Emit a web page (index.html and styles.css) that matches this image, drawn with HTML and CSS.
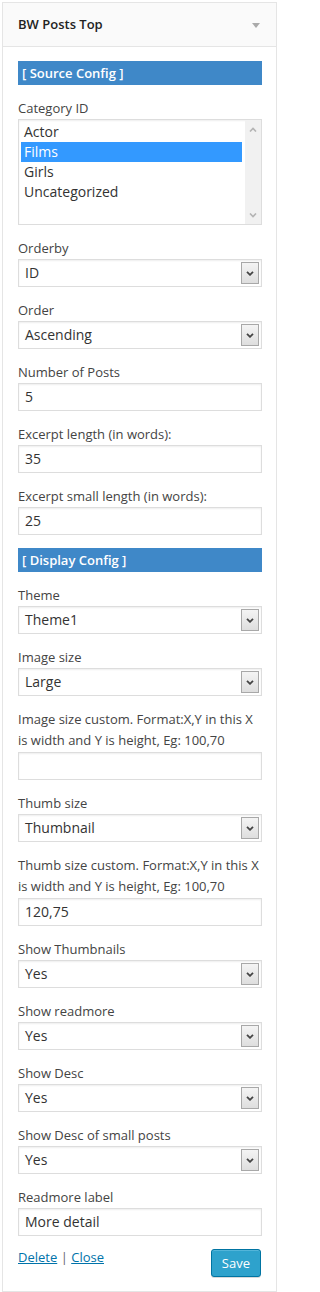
FILE: index.html
```html
<!DOCTYPE html>
<html>
<head>
<meta charset="utf-8">
<link rel="stylesheet" href="styles.css">
</head>
<body>
<div class="widget">
  <div class="widget-top">
    <h3 class="widget-title">BW Posts Top</h3>
    <span class="toggle"></span>
  </div>
  <div class="widget-inside">
    <div class="section">[ Source Config ]</div>

    <div class="field">
      <label class="lbl">Category ID</label>
      <div class="listbox">
        <div class="options">
          <div class="opt">Actor</div>
          <div class="opt selected">Films</div>
          <div class="opt">Girls</div>
          <div class="opt">Uncategorized</div>
        </div>
        <div class="scrollbar">
          <svg class="sb-arrow" width="8" height="5" viewBox="0 0 8 5"><polyline points="1,4.5 4,1.5 7,4.5" fill="none" stroke="#b4b4b4" stroke-width="1.6"/></svg>
          <svg class="sb-arrow" width="8" height="5" viewBox="0 0 8 5"><polyline points="1,0.5 4,3.5 7,0.5" fill="none" stroke="#b4b4b4" stroke-width="1.6"/></svg>
        </div>
      </div>
    </div>

    <div class="field">
      <label class="lbl">Orderby</label>
      <div class="select"><span>ID</span><span class="dd"><svg width="8" height="5" viewBox="0 0 8 5"><polyline points="1,0.8 4,3.8 7,0.8" fill="none" stroke="#444" stroke-width="1.8"/></svg></span></div>
    </div>

    <div class="field">
      <label class="lbl">Order</label>
      <div class="select"><span>Ascending</span><span class="dd"><svg width="8" height="5" viewBox="0 0 8 5"><polyline points="1,0.8 4,3.8 7,0.8" fill="none" stroke="#444" stroke-width="1.8"/></svg></span></div>
    </div>

    <div class="field">
      <label class="lbl">Number of Posts</label>
      <div class="input">5</div>
    </div>

    <div class="field">
      <label class="lbl">Excerpt length (in words):</label>
      <div class="input">35</div>
    </div>

    <div class="field">
      <label class="lbl">Excerpt small length (in words):</label>
      <div class="input">25</div>
    </div>

    <div class="section">[ Display Config ]</div>

    <div class="field">
      <label class="lbl">Theme</label>
      <div class="select"><span>Theme1</span><span class="dd"><svg width="8" height="5" viewBox="0 0 8 5"><polyline points="1,0.8 4,3.8 7,0.8" fill="none" stroke="#444" stroke-width="1.8"/></svg></span></div>
    </div>

    <div class="field">
      <label class="lbl">Image size</label>
      <div class="select"><span>Large</span><span class="dd"><svg width="8" height="5" viewBox="0 0 8 5"><polyline points="1,0.8 4,3.8 7,0.8" fill="none" stroke="#444" stroke-width="1.8"/></svg></span></div>
    </div>

    <div class="field">
      <label class="lbl two">Image size custom. Format:X,Y in this X is width and Y is height, Eg: 100,70</label>
      <div class="input"></div>
    </div>

    <div class="field">
      <label class="lbl">Thumb size</label>
      <div class="select"><span>Thumbnail</span><span class="dd"><svg width="8" height="5" viewBox="0 0 8 5"><polyline points="1,0.8 4,3.8 7,0.8" fill="none" stroke="#444" stroke-width="1.8"/></svg></span></div>
    </div>

    <div class="field">
      <label class="lbl two">Thumb size custom. Format:X,Y in this X is width and Y is height, Eg: 100,70</label>
      <div class="input">120,75</div>
    </div>

    <div class="field">
      <label class="lbl">Show Thumbnails</label>
      <div class="select"><span>Yes</span><span class="dd"><svg width="8" height="5" viewBox="0 0 8 5"><polyline points="1,0.8 4,3.8 7,0.8" fill="none" stroke="#444" stroke-width="1.8"/></svg></span></div>
    </div>

    <div class="field">
      <label class="lbl">Show readmore</label>
      <div class="select"><span>Yes</span><span class="dd"><svg width="8" height="5" viewBox="0 0 8 5"><polyline points="1,0.8 4,3.8 7,0.8" fill="none" stroke="#444" stroke-width="1.8"/></svg></span></div>
    </div>

    <div class="field">
      <label class="lbl">Show Desc</label>
      <div class="select"><span>Yes</span><span class="dd"><svg width="8" height="5" viewBox="0 0 8 5"><polyline points="1,0.8 4,3.8 7,0.8" fill="none" stroke="#444" stroke-width="1.8"/></svg></span></div>
    </div>

    <div class="field">
      <label class="lbl">Show Desc of small posts</label>
      <div class="select"><span>Yes</span><span class="dd"><svg width="8" height="5" viewBox="0 0 8 5"><polyline points="1,0.8 4,3.8 7,0.8" fill="none" stroke="#444" stroke-width="1.8"/></svg></span></div>
    </div>

    <div class="field">
      <label class="lbl">Readmore label</label>
      <div class="input">More detail</div>
    </div>

    <div class="actions">
      <div class="links"><a href="#">Delete</a> <span class="sep">|</span> <a href="#">Close</a></div>
      <button class="save">Save</button>
    </div>
  </div>
</div>
</body>
</html>
```

FILE: styles.css
```css
html, body {
  margin: 0;
  padding: 0;
  background: #fff;
}
body {
  font-family: "Open Sans", "Liberation Sans", sans-serif;
  font-size: 13px;
  color: #444;
}
.widget {
  width: 275px;
  box-sizing: border-box;
  margin: 2px 0 0 2px;
  border: 1px solid #e5e5e5;
  background: #fff;
}
.widget-top {
  height: 43px;
  background: #fafafa;
  border-bottom: 1px solid #e5e5e5;
  display: flex;
  align-items: center;
  justify-content: space-between;
  padding: 0 16px 0 15px;
}
.widget-title {
  margin: 0;
  font-size: 13px;
  font-weight: 600;
  color: #222;
  line-height: 43px;
}
.toggle {
  width: 0;
  height: 0;
  border-left: 4px solid transparent;
  border-right: 4px solid transparent;
  border-top: 5px solid #aaa;
  margin-top: 1px;
}
.widget-inside {
  padding: 14px 14px 14px 15px;
}
.section {
  height: 24px;
  line-height: 24px;
  background: #3f88c8;
  color: #fff;
  font-weight: 600;
  padding-left: 4px;
  margin-bottom: 13px;
}
.field {
  margin-bottom: 13px;
}
.lbl {
  display: block;
  line-height: 21px;
  color: #444;
}
.lbl.two {
  padding-bottom: 1px;
}
.listbox {
  height: 106px;
  box-sizing: border-box;
  border: 1px solid #ddd;
  display: flex;
  background: #fff;
  box-shadow: inset 0 1px 2px rgba(0,0,0,.07);
}
.options {
  flex: 1;
  padding: 2px 3px 0 2px;
}
.opt {
  height: 20px;
  line-height: 20px;
  padding-left: 3px;
  font-size: 14px;
  color: #333;
}
.opt.selected {
  background: #3399ff;
  color: #fff;
}
.scrollbar {
  width: 16px;
  background: #f1f1f1;
  display: flex;
  flex-direction: column;
  justify-content: space-between;
  align-items: center;
  padding: 7px 0 6px;
}
.select, .input {
  height: 28px;
  box-sizing: border-box;
  border: 1px solid #ddd;
  background: #fff;
  box-shadow: inset 0 1px 2px rgba(0,0,0,.07);
  font-size: 14px;
  color: #333;
  line-height: 26px;
  padding-left: 6px;
}
.select {
  display: flex;
  justify-content: space-between;
  align-items: center;
  padding-right: 2px;
}
.dd {
  width: 18px;
  height: 22px;
  box-sizing: border-box;
  border: 1px solid #a8a8a8;
  background: linear-gradient(#f4f4f4, #dedede);
  display: flex;
  align-items: center;
  justify-content: center;
}
.dd svg {
  display: block;
}
.actions {
  display: flex;
  justify-content: space-between;
  align-items: flex-start;
}
.links {
  line-height: 16px;
  padding-top: 0;
}
.links a {
  color: #0073aa;
  text-decoration: underline;
}
.sep {
  color: #666;
}
.save {
  height: 28px;
  box-sizing: border-box;
  padding: 0 10px;
  background: #2ea2cc;
  border: 1px solid #0074a2;
  border-radius: 3px;
  box-shadow: inset 0 1px 0 rgba(120,200,230,.5), 0 1px 0 rgba(0,0,0,.15);
  color: #fff;
  font-family: "Open Sans", "Liberation Sans", sans-serif;
  font-size: 13px;
  line-height: 26px;
  margin-right: 1px;
}
```
